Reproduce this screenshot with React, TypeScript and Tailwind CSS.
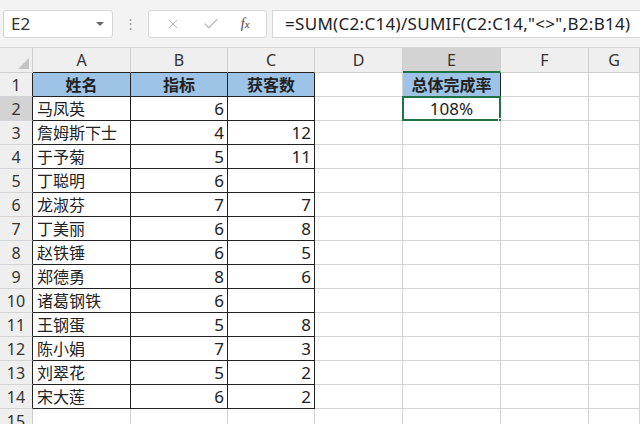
import { X, Check } from "lucide-react";

const cols = [
  { key: "A", w: "w-[98px]" },
  { key: "B", w: "w-[97px]" },
  { key: "C", w: "w-[87px]" },
  { key: "D", w: "w-[88px]" },
  { key: "E", w: "w-[98px]" },
  { key: "F", w: "w-[88px]" },
  { key: "G", w: "flex-1" },
];

const people: [string, number, number | null][] = [
  ["马凤英", 6, null],
  ["詹姆斯下士", 4, 12],
  ["于予菊", 5, 11],
  ["丁聪明", 6, null],
  ["龙淑芬", 7, 7],
  ["丁美丽", 6, 8],
  ["赵铁锤", 6, 5],
  ["郑德勇", 8, 6],
  ["诸葛钢铁", 6, null],
  ["王钢蛋", 5, 8],
  ["陈小娟", 7, 3],
  ["刘翠花", 5, 2],
  ["宋大莲", 6, 2],
];

const font = { fontFamily: '"Noto Sans", "Noto Sans CJK SC", sans-serif' };

function Toolbar() {
  return (
    <div className="h-[48px] bg-[#f3f3f3] border-b border-[#dadada] flex items-center pl-[3px] gap-0">
      <div className="w-[110px] h-[28px] bg-white border border-[#d6d6d6] rounded-[3px] flex items-center justify-between pl-[7px] pr-[8px]">
        <span className="text-[17px] text-[#333]">E2</span>
        <div className="w-0 h-0 border-l-[4px] border-l-transparent border-r-[4px] border-r-transparent border-t-[4px] border-t-[#666]" />
      </div>
      <div className="w-[35px] flex justify-center text-[#999] text-[13px] leading-none">⋮</div>
      <div className="w-[119px] h-[28px] bg-white border border-[#d6d6d6] rounded-[3px] flex items-center justify-around px-[6px]">
        <X size={16} strokeWidth={1.3} className="text-[#aaa]" />
        <Check size={18} strokeWidth={1.6} className="text-[#bbb]" />
        <span className="italic text-[14px] text-[#444]" style={{ fontFamily: '"Liberation Serif", serif' }}>
          f<span className="text-[11px]">x</span>
        </span>
      </div>
      <div className="ml-[5px] flex-1 h-[28px] bg-white border border-[#d6d6d6] border-r-0 flex items-center pl-[12px]">
        <span className="text-[17px] tracking-[0.3px] text-[#222] whitespace-nowrap">
          =SUM(C2:C14)/SUMIF(C2:C14,"&lt;&gt;",B2:B14)
        </span>
      </div>
    </div>
  );
}

function ColHeader() {
  return (
    <div className="flex h-[25px] bg-[#efefef]">
      <div className="w-[33px] border-r border-b border-[#cfcfcf] relative">
        <div className="absolute right-[3px] bottom-[3px] w-0 h-0 border-l-[11px] border-l-transparent border-b-[11px] border-b-[#c4c4c4]" />
      </div>
      {cols.map((c) => {
        const sel = c.key === "E";
        const inTable = c.key === "A" || c.key === "B" || c.key === "C";
        return (
          <div
            key={c.key}
            className={`${c.w} flex items-center justify-center text-[16px] text-[#333] border-r border-[#cfcfcf] ${
              sel ? "bg-[#d3d3d3] border-b-2 border-b-[#217346]" : inTable ? "border-b border-b-[#222]" : "border-b border-b-[#cfcfcf]"
            }`}
          >
            {c.key}
          </div>
        );
      })}
    </div>
  );
}

function Row({ n }: { n: number }) {
  const header = n === 1;
  const p = n >= 2 && n <= 14 ? people[n - 2] : null;
  const inTable = n <= 14;
  const selRow = n === 2;
  return (
    <div className="flex h-[24px]">
      <div
        className={`w-[33px] flex items-center justify-center text-[16px] text-[#333] border-b border-[#d4d4d4] ${
          selRow ? "bg-[#d3d3d3]" : "bg-[#efefef]"
        } ${inTable ? "border-r border-r-[#222]" : "border-r border-r-[#cfcfcf]"}`}
      >
        {n}
      </div>
      {cols.map((c) => {
        const tbl = inTable && (c.key === "A" || c.key === "B" || c.key === "C");
        let content: React.ReactNode = null;
        let align = "justify-end pr-[3px] text-[17px]";
        if (header && c.key === "A") content = "姓名";
        if (header && c.key === "B") content = "指标";
        if (header && c.key === "C") content = "获客数";
        if (header) align = "justify-center font-bold";
        if (p && c.key === "A") {
          content = p[0];
          align = "justify-start pl-[4px]";
        }
        if (p && c.key === "B") content = p[1];
        if (p && c.key === "C") content = p[2];
        let extra = tbl ? "border-r border-b border-[#222]" : "border-r border-b border-[#d4d4d4]";
        let bg = header && tbl ? "bg-[#9dc3e6]" : "bg-white";
        if (c.key === "E" && n === 1) {
          content = "总体完成率";
          align = "justify-center font-bold";
          bg = "bg-[#9dc3e6]";
          extra = "border-r border-b border-[#222]";
        }
        if (c.key === "E" && n === 2) {
          content = "108%";
          align = "justify-center text-[17px]";
          extra = "border-r border-b border-[#d4d4d4]";
        }
        return (
          <div key={c.key} className={`${c.w} relative flex items-center text-[16px] text-[#222] ${align} ${extra} ${bg}`}>
            {content}
            {c.key === "E" && n === 2 && (
              <>
                <div className="absolute -left-[1px] -top-[1px] -right-[1px] -bottom-[1px] border-2 border-[#217346] pointer-events-none" />
                <div className="absolute -right-[4px] -bottom-[4px] w-[6px] h-[6px] bg-[#217346] border border-white" />
              </>
            )}
          </div>
        );
      })}
    </div>
  );
}

export default function App() {
  return (
    <div className="w-[640px] h-[424px] overflow-hidden bg-white" style={font}>
      <Toolbar />
      <ColHeader />
      {Array.from({ length: 15 }, (_, i) => (
        <Row key={i} n={i + 1} />
      ))}
    </div>
  );
}
